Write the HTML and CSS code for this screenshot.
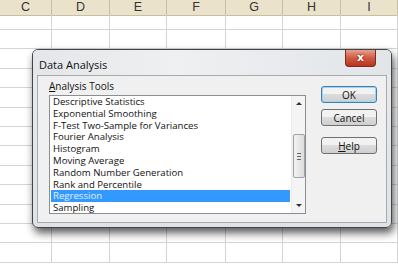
FILE: index.html
```html
<!DOCTYPE html>
<html lang="en">
<head>
<meta charset="UTF-8">
<title>Data Analysis</title>
<link rel="stylesheet" href="styles.css">
</head>
<body>
<div class="sheet">
    <div class="row head">
        <div class="cell">C</div><div class="cell">D</div><div class="cell">E</div><div class="cell">F</div><div class="cell">G</div><div class="cell">H</div><div class="cell">I</div>
    </div>
    <div class="row first">
        <div class="cell"></div><div class="cell"></div><div class="cell"></div><div class="cell"></div><div class="cell"></div><div class="cell"></div><div class="cell"></div>
    </div>
    <div class="row"><div class="cell"></div><div class="cell"></div><div class="cell"></div><div class="cell"></div><div class="cell"></div><div class="cell"></div><div class="cell"></div></div>
    <div class="row"><div class="cell"></div><div class="cell"></div><div class="cell"></div><div class="cell"></div><div class="cell"></div><div class="cell"></div><div class="cell"></div></div>
    <div class="row"><div class="cell"></div><div class="cell"></div><div class="cell"></div><div class="cell"></div><div class="cell"></div><div class="cell"></div><div class="cell"></div></div>
    <div class="row"><div class="cell"></div><div class="cell"></div><div class="cell"></div><div class="cell"></div><div class="cell"></div><div class="cell"></div><div class="cell"></div></div>
    <div class="row"><div class="cell"></div><div class="cell"></div><div class="cell"></div><div class="cell"></div><div class="cell"></div><div class="cell"></div><div class="cell"></div></div>
    <div class="row"><div class="cell"></div><div class="cell"></div><div class="cell"></div><div class="cell"></div><div class="cell"></div><div class="cell"></div><div class="cell"></div></div>
    <div class="row"><div class="cell"></div><div class="cell"></div><div class="cell"></div><div class="cell"></div><div class="cell"></div><div class="cell"></div><div class="cell"></div></div>
    <div class="row"><div class="cell"></div><div class="cell"></div><div class="cell"></div><div class="cell"></div><div class="cell"></div><div class="cell"></div><div class="cell"></div></div>
    <div class="row"><div class="cell"></div><div class="cell"></div><div class="cell"></div><div class="cell"></div><div class="cell"></div><div class="cell"></div><div class="cell"></div></div>
    <div class="row"><div class="cell"></div><div class="cell"></div><div class="cell"></div><div class="cell"></div><div class="cell"></div><div class="cell"></div><div class="cell"></div></div>
    <div class="row"><div class="cell"></div><div class="cell"></div><div class="cell"></div><div class="cell"></div><div class="cell"></div><div class="cell"></div><div class="cell"></div></div>
    <div class="row"><div class="cell"></div><div class="cell"></div><div class="cell"></div><div class="cell"></div><div class="cell"></div><div class="cell"></div><div class="cell"></div></div>
</div>

<div class="dialog">
    <div class="titlebar">
        <span class="title">Data Analysis</span>
        <button class="close">x</button>
    </div>
    <div class="client">
        <div class="tools">
            <div class="label"><u>A</u>nalysis Tools</div>
            <div class="listbox">
                <ul class="items">
                    <li>Descriptive Statistics</li>
                    <li>Exponential Smoothing</li>
                    <li>F-Test Two-Sample for Variances</li>
                    <li>Fourier Analysis</li>
                    <li>Histogram</li>
                    <li>Moving Average</li>
                    <li>Random Number Generation</li>
                    <li>Rank and Percentile</li>
                    <li class="selected">Regression</li>
                    <li>Sampling</li>
                </ul>
                <div class="scrollbar">
                    <span class="arrow up"></span>
                    <div class="thumb"><span class="grip"></span></div>
                    <span class="arrow down"></span>
                </div>
            </div>
        </div>
        <div class="actions">
            <button class="btn default">OK</button>
            <button class="btn">Cancel</button>
            <button class="btn help"><u>H</u>elp</button>
        </div>
    </div>
</div>
</body>
</html>
```

FILE: styles.css
```css
body {
    margin: 0;
    width: 398px;
    height: 272px;
    overflow: hidden;
    background: #fff;
    font-family: "Open Sans", "Noto Sans", sans-serif;
}
.sheet {
    width: 398px;
}
.row {
    display: grid;
    grid-template-columns: 52px 58px 57px 59px 57px 58px 57px;
    height: 19.4px;
}
.row.head {
    height: 15px;
    background: #ebe2cc;
}
.row.first {
    height: 15px;
}
.cell {
    border-right: 1px solid #d4d4d4;
    border-bottom: 1px solid #d4d4d4;
}
.head .cell {
    border-color: #c9bda2;
    font-family: "Liberation Sans", Arial, sans-serif;
    font-size: 12.5px;
    line-height: 15px;
    text-align: center;
    color: #333;
}

/* dialog floats above the sheet */
.dialog {
    position: absolute;
    left: 32px;
    top: 49px;
    width: 358px;
    height: 177px;
    border: 1px solid #444;
    border-radius: 6px;
    background: linear-gradient(to bottom, #e9ebee, #dfe2e6);
    box-shadow: 2px 5px 9px rgba(0, 0, 0, 0.65);
    display: flex;
    flex-direction: column;
}
.titlebar {
    height: 25px;
    display: flex;
    align-items: flex-start;
    justify-content: space-between;
    background: linear-gradient(to right, #e4e6e9, #eef0f2 40%, #e2e5e8);
    border-radius: 5px 5px 0 0;
}
.title {
    font-size: 11px;
    color: #111;
    padding: 7px 0 0 6px;
}
.close {
    width: 31px;
    height: 17px;
    margin-right: 15px;
    padding: 0;
    border: 1px solid #7a2a1e;
    border-top: none;
    border-radius: 0 0 4px 4px;
    background: linear-gradient(to bottom, #e8a08e, #cf5a41 50%, #b8341e);
    color: #fff;
    font-family: "DejaVu Sans", sans-serif;
    font-size: 11px;
    font-weight: bold;
    line-height: 14px;
    text-shadow: 0 0 2px #4a0d05;
}
.client {
    flex: 1;
    margin: 0 4px 4px 4px;
    background: #f0f0f0;
    border: 1px solid #a7abb0;
    display: flex;
}
.tools {
    padding: 2px 0 0 11px;
}
.label {
    font-size: 10px;
    line-height: 16px;
    color: #111;
    margin-bottom: 1px;
}
.listbox {
    width: 255px;
    height: 117px;
    border: 1px solid #8a8f96;
    background: #fff;
    display: flex;
}
.items {
    flex: 1;
    list-style: none;
    margin: 0;
    padding: 0 1px;
    font-size: 9.6px;
    line-height: 11.8px;
    color: #111;
}
.items li {
    padding-left: 2px;
    white-space: nowrap;
}
.items .selected {
    background: #3399ff;
    color: #e4f0ff;
}
.scrollbar {
    width: 13px;
    background: #f4f4f4;
    border-left: 1px solid #ececec;
    display: flex;
    flex-direction: column;
    align-items: center;
}
.arrow {
    width: 0;
    height: 0;
    border-left: 3px solid transparent;
    border-right: 3px solid transparent;
}
.arrow.up {
    border-bottom: 3px solid #333;
    margin: 6px 0 29px;
}
.arrow.down {
    border-top: 3px solid #333;
    margin-top: auto;
    margin-bottom: 6px;
}
.thumb {
    width: 10px;
    height: 42px;
    border: 1px solid #9ea3a8;
    border-radius: 2px;
    background: linear-gradient(to right, #f3f3f3, #dcdcdc);
    display: flex;
    align-items: center;
    justify-content: center;
}
.grip {
    width: 4px;
    height: 5px;
    border-top: 1px solid #666;
    border-bottom: 1px solid #666;
    background: linear-gradient(#666, #666) center / 4px 1px no-repeat;
}
.actions {
    display: flex;
    flex-direction: column;
    gap: 6px;
    margin-left: 15px;
    padding-top: 10px;
}
.btn {
    width: 56px;
    height: 17px;
    padding: 0;
    border: 1px solid #707070;
    border-radius: 3px;
    background: linear-gradient(to bottom, #f2f2f2 45%, #dcdcdc 50%, #cfcfcf);
    font-family: "Open Sans", "Noto Sans", sans-serif;
    font-size: 10px;
    line-height: 14px;
    color: #111;
}
.btn.default {
    border-color: #3c7fb1;
    box-shadow: inset 0 0 0 1px #9fd3ef;
}
.btn.help {
    margin-top: 5px;
}
```
